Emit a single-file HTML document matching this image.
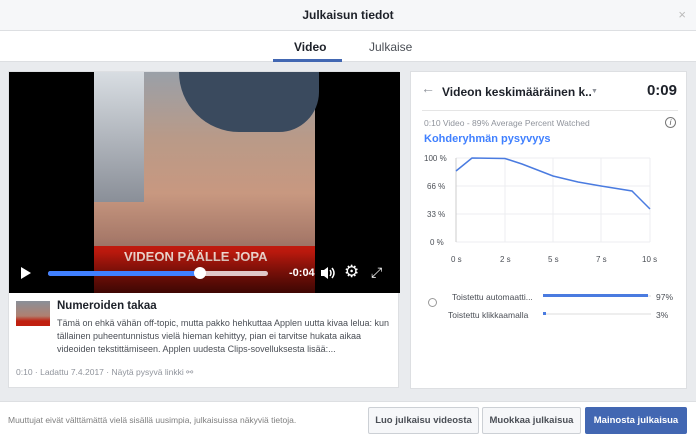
<!DOCTYPE html>
<html><head><meta charset="utf-8"><style>
*{box-sizing:border-box;margin:0;padding:0}
body{width:696px;height:438px;overflow:hidden;font-family:"Liberation Sans",Arial,sans-serif;background:#e9ebee;position:relative;color:#1d2129}
.abs{position:absolute}
#hdr{left:0;top:0;width:696px;height:31px;background:#f6f7f9;border-bottom:1px solid #dddfe2;text-align:center;font-size:12px;font-weight:bold;line-height:30px}
#tabs{left:0;top:31px;width:696px;height:31px;background:#fff;border-bottom:1px solid #dddfe2}
.tab{top:9px;font-size:12px}
#left{left:8px;top:71px;width:391px;height:317px;background:#fff;border:1px solid #dddfe2}
#video{left:0;top:0;width:391px;height:221px;background:#000;overflow:hidden}
#right{left:410px;top:71px;width:277px;height:318px;background:#fff;border:1px solid #dddfe2}
#foot{left:0;top:401px;width:696px;height:37px;background:#fff;border-top:1px solid #dddfe2}
.btn{top:5px;height:27px;border:1px solid #ccd0d5;background:#f6f7f9;font-size:9.5px;font-weight:bold;color:#4b4f56;text-align:center;line-height:25px;border-radius:2px;white-space:nowrap}
</style></head><body>
<div id="hdr" class="abs">Julkaisun tiedot<span class="abs" style="right:10px;top:0;color:#bbb;font-weight:normal;font-size:13px">×</span></div>
<div id="tabs" class="abs">
<div class="abs tab" style="left:294px;font-weight:bold">Video</div>
<div class="abs tab" style="left:369px;color:#4b4f56">Julkaise</div>
<div class="abs" style="left:273px;top:28px;width:69px;height:3px;background:#4267b2"></div>
</div>
<div id="left" class="abs">
<div id="video" class="abs">
<div class="abs" style="left:85px;top:0;width:221px;height:221px;background:linear-gradient(180deg,#9aa0a8 0%,#b99a88 30%,#c89880 55%,#a87a6a 75%,#5a5050 100%)"></div>
<div class="abs" style="left:85px;top:0;width:50px;height:130px;background:linear-gradient(#d8dde2,#8a8f98)"></div>
<div class="abs" style="left:170px;top:0;width:140px;height:60px;background:#3a4a5e;border-radius:0 0 40px 60px"></div>
<div class="abs" style="left:85px;top:174px;width:221px;height:47px;background:linear-gradient(#c01a0e,#8a1008)"></div>
<div class="abs" style="left:115px;top:177px;color:#f1d8d0;font-weight:bold;font-size:13px">VIDEON PÄÄLLE JOPA</div>
<div class="abs" style="left:0;top:180px;width:391px;height:41px;background:linear-gradient(rgba(0,0,0,0),rgba(0,0,0,.55))"></div>
<svg class="abs" style="left:11px;top:195px" width="12" height="12"><path d="M1 0L11 6L1 12Z" fill="#fff"/></svg>
<div class="abs" style="left:39px;top:199px;width:220px;height:5px;background:#e0c8c8;border-radius:3px"></div>
<div class="abs" style="left:39px;top:199px;width:152px;height:5px;background:#4080ff;border-radius:3px"></div>
<div class="abs" style="left:185px;top:195px;width:12px;height:12px;background:#fff;border-radius:50%"></div>
<div class="abs" style="left:280px;top:195px;color:#fff;font-size:11px;font-weight:bold">-0:04</div>
<svg class="abs" style="left:311px;top:194px" width="16" height="14"><path d="M1 4H4L8 1V13L4 10H1Z" fill="#fff"/><path d="M10 4Q12 7 10 10M12 2Q16 7 12 12" stroke="#fff" stroke-width="1.5" fill="none"/></svg>
<div class="abs" style="left:335px;top:190px;color:#fff;font-size:17px">⚙︎</div>
<div class="abs" style="left:362px;top:192px;color:#fff;font-size:14px">⤢</div>
</div>
<div class="abs" style="left:7px;top:229px;width:34px;height:25px;background:linear-gradient(#8a9098,#b08070 60%,#c02010 80%)"></div>
<div class="abs" style="left:48px;top:228px;font-size:11.5px;font-weight:bold">Numeroiden takaa</div>
<div class="abs" style="left:48px;top:245px;width:340px;font-size:9px;line-height:13px;color:#4b4f56">Tämä on ehkä vähän off-topic, mutta pakko hehkuttaa Applen uutta kivaa lelua: kun tällainen puheentunnistus vielä hieman kehittyy, pian ei tarvitse hukata aikaa videoiden tekstittämiseen. Applen uudesta Clips-sovelluksesta lisää:...</div>
<div class="abs" style="left:7px;top:295px;font-size:8.5px;color:#90949c">0:10 · Ladattu 7.4.2017 · Näytä pysyvä linkki ⚯</div>
</div>
<div id="right" class="abs">
<div class="abs" style="left:10px;top:8px;color:#90949c;font-size:14px">←</div>
<div class="abs" style="left:31px;top:13px;font-size:12px;font-weight:bold;white-space:nowrap">Videon keskimääräinen k..</div>
<div class="abs" style="left:180px;top:16px;color:#90949c;font-size:7px">▼</div>
<div class="abs" style="right:9px;top:10px;font-size:15px;font-weight:bold">0:09</div>
<div class="abs" style="left:11px;top:38px;width:256px;height:1px;background:#e5e5e5"></div>
<div class="abs" style="left:13px;top:46px;font-size:8.5px;color:#90949c">0:10 Video - 89% Average Percent Watched</div>
<div class="abs" style="right:10px;top:45px;width:11px;height:11px;border:1px solid #777;border-radius:50%;font-size:8px;text-align:center;line-height:9px;font-style:italic;color:#555">i</div>
<div class="abs" style="left:13px;top:61px;font-size:11px;font-weight:bold;color:#4080ff">Kohderyhmän pysyvyys</div>
<svg class="abs" style="left:0;top:0" width="277" height="200" font-family="Liberation Sans,Arial,sans-serif" font-size="8" fill="#4b4f56">
<g stroke="#eceef0" stroke-width="1">
<line x1="45" y1="86" x2="239" y2="86"/><line x1="45" y1="114" x2="239" y2="114"/><line x1="45" y1="142" x2="239" y2="142"/><line x1="45" y1="170" x2="239" y2="170"/>
<line x1="94" y1="86" x2="94" y2="170"/><line x1="142" y1="86" x2="142" y2="170"/><line x1="190" y1="86" x2="190" y2="170"/><line x1="239" y1="86" x2="239" y2="170"/>
<line x1="45" y1="86" x2="45" y2="170" stroke="#ccc"/>
</g>
<polyline fill="none" stroke="#4a7be0" stroke-width="1.5" points="45,99 61,86 94,86.5 111,92 142,104 167,110 190,114 221,119 239,137"/>
<text x="13" y="89">100 %</text><text x="16" y="117">66 %</text><text x="16" y="145">33 %</text><text x="19" y="173">0 %</text>
<text x="40" y="190">0 s</text><text x="89" y="190">2 s</text><text x="137" y="190">5 s</text><text x="185" y="190">7 s</text><text x="231" y="190">10 s</text>
</svg>
<div class="abs" style="left:17px;top:226px;width:9px;height:9px;border:1px solid #999;border-radius:50%"></div>
<div class="abs" style="left:41px;top:220px;font-size:8.5px;color:#4b4f56">Toistettu automaatti...</div>
<div class="abs" style="left:37px;top:238px;font-size:8.5px;color:#4b4f56">Toistettu klikkaamalla</div>
<div class="abs" style="left:132px;top:223px;width:108px;height:2px;background:#eee"></div>
<div class="abs" style="left:132px;top:222px;width:105px;height:3px;background:#4a7be0"></div>
<div class="abs" style="left:132px;top:241px;width:108px;height:2px;background:#eee"></div>
<div class="abs" style="left:132px;top:240px;width:3px;height:3px;background:#4a7be0"></div>
<div class="abs" style="left:245px;top:220px;font-size:8.5px;color:#4b4f56">97%</div>
<div class="abs" style="left:245px;top:238px;font-size:8.5px;color:#4b4f56">3%</div>
</div>
<div id="foot" class="abs">
<div class="abs" style="left:8px;top:13px;font-size:8.5px;color:#7f7f7f">Muuttujat eivät välttämättä vielä sisällä uusimpia, julkaisuissa näkyviä tietoja.</div>
<div class="abs btn" style="left:368px;width:111px">Luo julkaisu videosta</div>
<div class="abs btn" style="left:482px;width:99px">Muokkaa julkaisua</div>
<div class="abs btn" style="left:585px;width:102px;background:#4267b2;border-color:#4267b2;color:#fff">Mainosta julkaisua</div>
</div>
</body></html>
